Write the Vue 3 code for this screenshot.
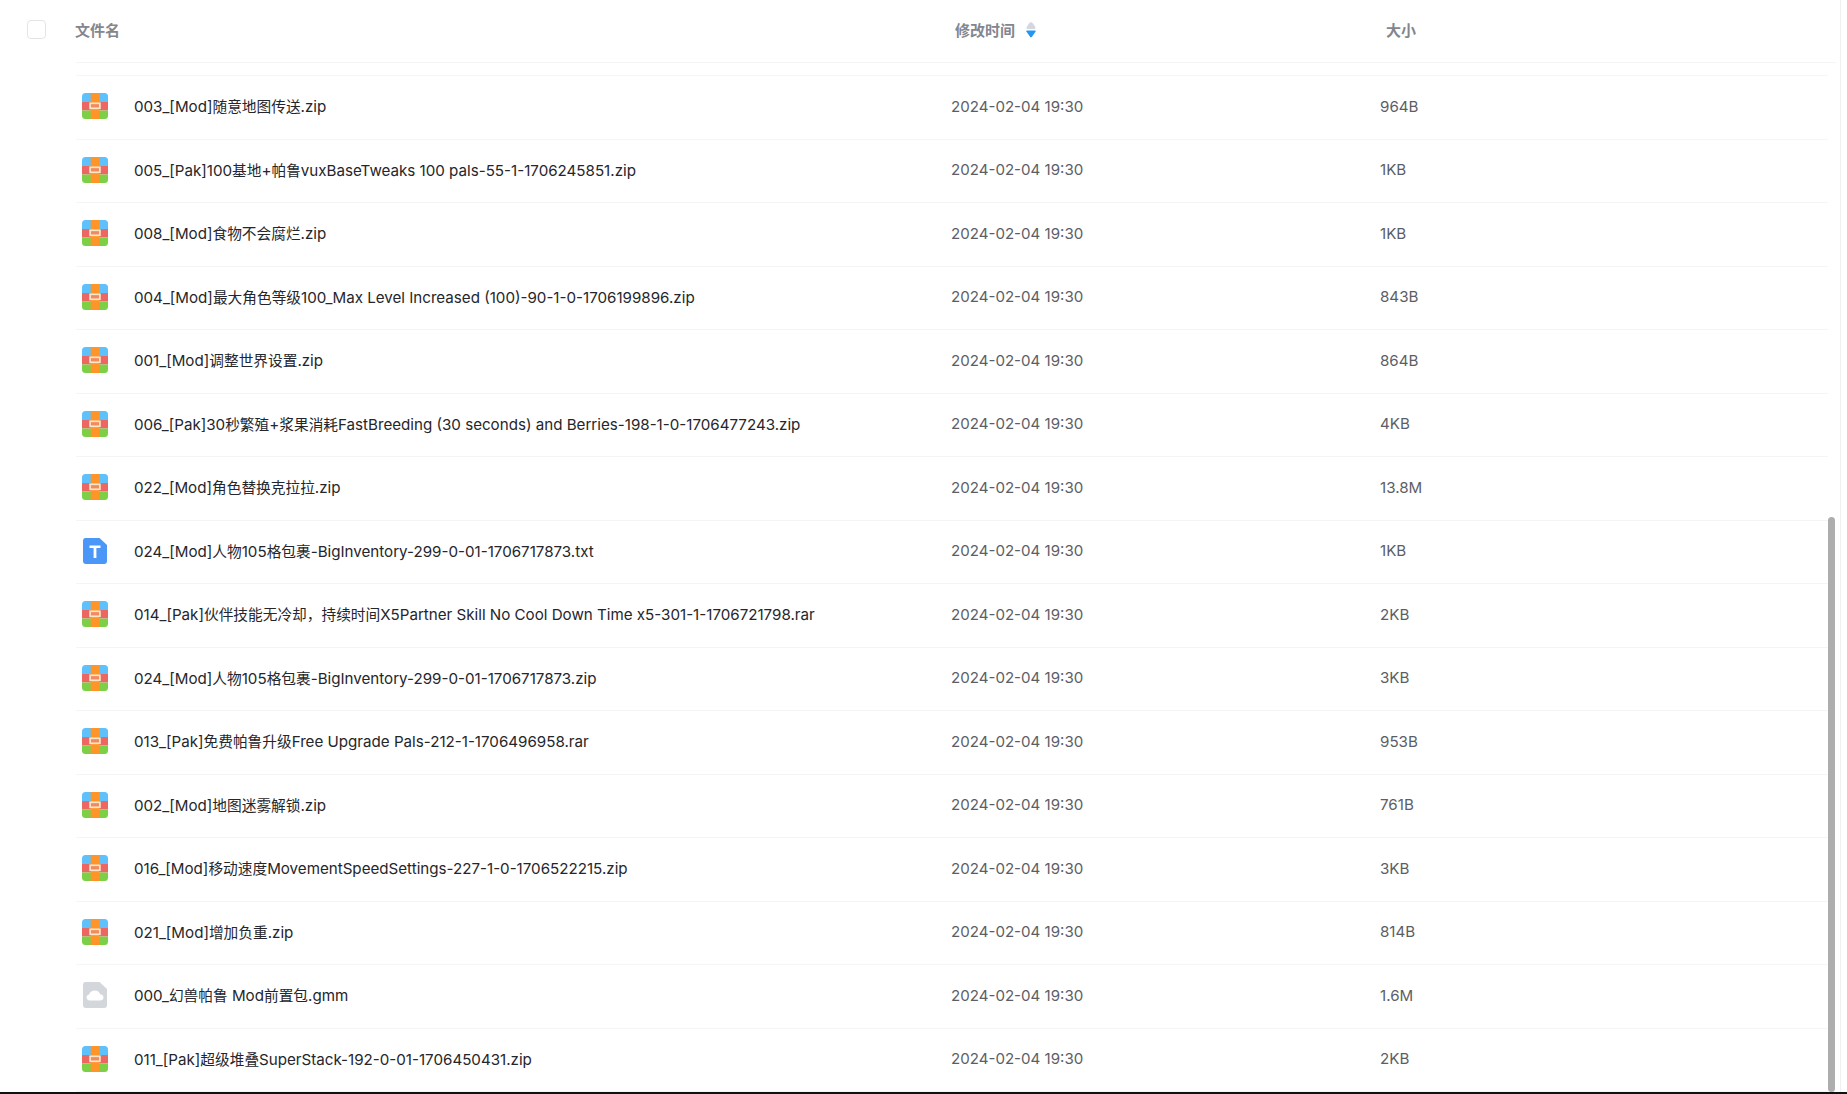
<template>
  <div class="page">
    <div class="content">
      <div class="list-head">
        <span class="check"></span>
        <span class="head-name">文件名</span>
        <span class="head-time">
          修改时间
          <svg class="sort" width="10" height="16" viewBox="0 0 10 16">
            <path d="M5 0.3 Q6 0.3 7 1.6 L9.2 4.8 Q10 6.6 8.6 7 L1.4 7 Q0 6.6 0.8 4.8 L3 1.6 Q4 0.3 5 0.3 Z" fill="#d5d6e0" />
            <path d="M0.9 8.4 L9.1 8.4 Q10 8.6 9.6 9.6 L5.8 14.9 Q5 15.7 4.2 14.9 L0.4 9.6 Q0 8.6 0.9 8.4 Z" fill="#2196f3" />
          </svg>
        </span>
        <span class="head-size">大小</span>
      </div>
      <div class="head-line"></div>

      <div class="gap-row"></div>

      <div v-for="file in files" :key="file.name + file.size" class="row">
        <div class="name-cell">
          <svg v-if="file.type === 'zip'" class="icon" width="26" height="26" viewBox="0 0 26 26">
            <clipPath id="zipClip"><rect width="26" height="26" rx="3.5" /></clipPath>
            <g clip-path="url(#zipClip)">
              <rect width="26" height="9" fill="#5ec1fb" />
              <rect y="9" width="26" height="8.5" fill="#ec6762" />
              <rect y="17.5" width="26" height="8.5" fill="#7dcf46" />
              <rect x="8.7" width="8.3" height="26" fill="#ff9428" />
              <rect x="8.1" y="10.3" width="9.8" height="5" fill="#f08a62" stroke="#fde6c6" stroke-width="1.7" />
            </g>
          </svg>
          <svg v-else-if="file.type === 'txt'" class="icon" width="26" height="26" viewBox="0 0 26 26">
            <path d="M3.5 0 H17.5 L25 7 V23 Q25 26 22 26 H4 Q1 26 1 23 V3 Q1 0 3.5 0 Z" fill="#4a97f8" />
            <path d="M7.5 7.5 H18.5 V10 H14.4 V20 H11.6 V10 H7.5 Z" fill="#fff" />
          </svg>
          <svg v-else class="icon" width="26" height="26" viewBox="0 0 26 26">
            <path d="M3.5 0 H17.5 L25 7 V23 Q25 26 22 26 H4 Q1 26 1 23 V3 Q1 0 3.5 0 Z" fill="#d3d6db" />
            <path d="M8 18.5 Q4.5 18.3 4.5 15.2 Q4.6 12.6 7.3 12.2 Q8.6 8.5 12.8 8.5 Q17 8.6 18 12.2 Q21.4 12.6 21.5 15.4 Q21.4 18.3 18 18.5 Z" fill="#fff" />
          </svg>
          <span class="file-name">
            <span
              v-for="(part, i) in splitName(file.name)"
              :key="i"
              :class="{ cjk: i % 2 === 1 }"
            >{{ part }}</span>
          </span>
        </div>
        <div class="time-cell">2024-02-04 19:30</div>
        <div class="size-cell">{{ file.size }}</div>
      </div>
    </div>

    <div class="scroll-thumb"></div>
    <div class="bottom-bar"></div>
  </div>
</template>

<script setup>
const files = [
  { type: 'zip', name: '003_[Mod]随意地图传送.zip', size: '964B' },
  { type: 'zip', name: '005_[Pak]100基地+帕鲁vuxBaseTweaks 100 pals-55-1-1706245851.zip', size: '1KB' },
  { type: 'zip', name: '008_[Mod]食物不会腐烂.zip', size: '1KB' },
  { type: 'zip', name: '004_[Mod]最大角色等级100_Max Level Increased (100)-90-1-0-1706199896.zip', size: '843B' },
  { type: 'zip', name: '001_[Mod]调整世界设置.zip', size: '864B' },
  { type: 'zip', name: '006_[Pak]30秒繁殖+浆果消耗FastBreeding (30 seconds) and Berries-198-1-0-1706477243.zip', size: '4KB' },
  { type: 'zip', name: '022_[Mod]角色替换克拉拉.zip', size: '13.8M' },
  { type: 'txt', name: '024_[Mod]人物105格包裹-BigInventory-299-0-01-1706717873.txt', size: '1KB' },
  { type: 'zip', name: '014_[Pak]伙伴技能无冷却，持续时间X5Partner Skill No Cool Down Time x5-301-1-1706721798.rar', size: '2KB' },
  { type: 'zip', name: '024_[Mod]人物105格包裹-BigInventory-299-0-01-1706717873.zip', size: '3KB' },
  { type: 'zip', name: '013_[Pak]免费帕鲁升级Free Upgrade Pals-212-1-1706496958.rar', size: '953B' },
  { type: 'zip', name: '002_[Mod]地图迷雾解锁.zip', size: '761B' },
  { type: 'zip', name: '016_[Mod]移动速度MovementSpeedSettings-227-1-0-1706522215.zip', size: '3KB' },
  { type: 'zip', name: '021_[Mod]增加负重.zip', size: '814B' },
  { type: 'gmm', name: '000_幻兽帕鲁 Mod前置包.gmm', size: '1.6M' },
  { type: 'zip', name: '011_[Pak]超级堆叠SuperStack-192-0-01-1706450431.zip', size: '2KB' }
]

// 中文和拉丁文字号不同，按文字类型拆开
const splitName = (name) => name.split(/([\u4e00-\u9fff，]+)/)
</script>

<style>
html,
body {
  margin: 0;
  background: #fff;
  overflow: hidden;
}
</style>

<style scoped>
.page {
  position: relative;
  width: 1847px;
  height: 1094px;
  overflow: hidden;
  background: #fff;
  font-family: Inter, "Noto Sans CJK SC", sans-serif;
  font-size: 15.15px;
  color: #25262b;
}

.content {
  width: 1841px;
  height: 1094px;
  box-sizing: border-box;
  border-right: 1px solid #f0f0f0;
}

.list-head {
  display: grid;
  grid-template-columns: 27px 19px 29px 878px 432px 1fr;
  align-items: center;
  height: 62px;
  box-sizing: border-box;
  padding-bottom: 3px;
  color: #84868f;
  font-weight: 700;
  font-size: 15px;
}

.check {
  grid-column: 2;
  width: 19px;
  height: 19px;
  box-sizing: border-box;
  border: 1px solid #e4e4e6;
  border-radius: 4px;
}

.head-name {
  grid-column: 4;
}

.head-time {
  grid-column: 5;
  display: flex;
  align-items: center;
  gap: 11px;
  padding-left: 2px;
}

.sort {
  flex: none;
}

.head-size {
  grid-column: 6;
  padding-left: 1px;
}

.head-line {
  height: 1px;
  margin: 0 4px 0 76px;
  background: #f5f5f6;
}

.gap-row {
  height: 12px;
  margin: 0 12px 0 76px;
  border-bottom: 1px solid #f5f5f6;
}

.row {
  display: grid;
  grid-template-columns: 875px 429px 1fr;
  align-items: center;
  height: 63.52px;
  box-sizing: border-box;
  padding-bottom: 2px;
  margin: 0 12px 0 76px;
  border-bottom: 1px solid #f5f5f6;
}

.name-cell {
  display: flex;
  align-items: center;
  padding-left: 6px;
}

.icon {
  flex: none;
  margin-right: 26px;
}

.file-name {
  white-space: nowrap;
  padding-bottom: 1px;
}

.cjk {
  font-size: 14.7px;
}

.time-cell,
.size-cell {
  color: #5c5e66;
  white-space: nowrap;
}

.time-cell {
  font-size: 15.1px;
}

.scroll-thumb {
  position: absolute;
  left: 1828px;
  top: 517px;
  width: 7px;
  height: 575px;
  border-radius: 4px;
  background: #adadad;
}

.bottom-bar {
  position: absolute;
  left: 0;
  right: 0;
  bottom: 0;
  height: 2px;
  background: #111;
}
</style>
